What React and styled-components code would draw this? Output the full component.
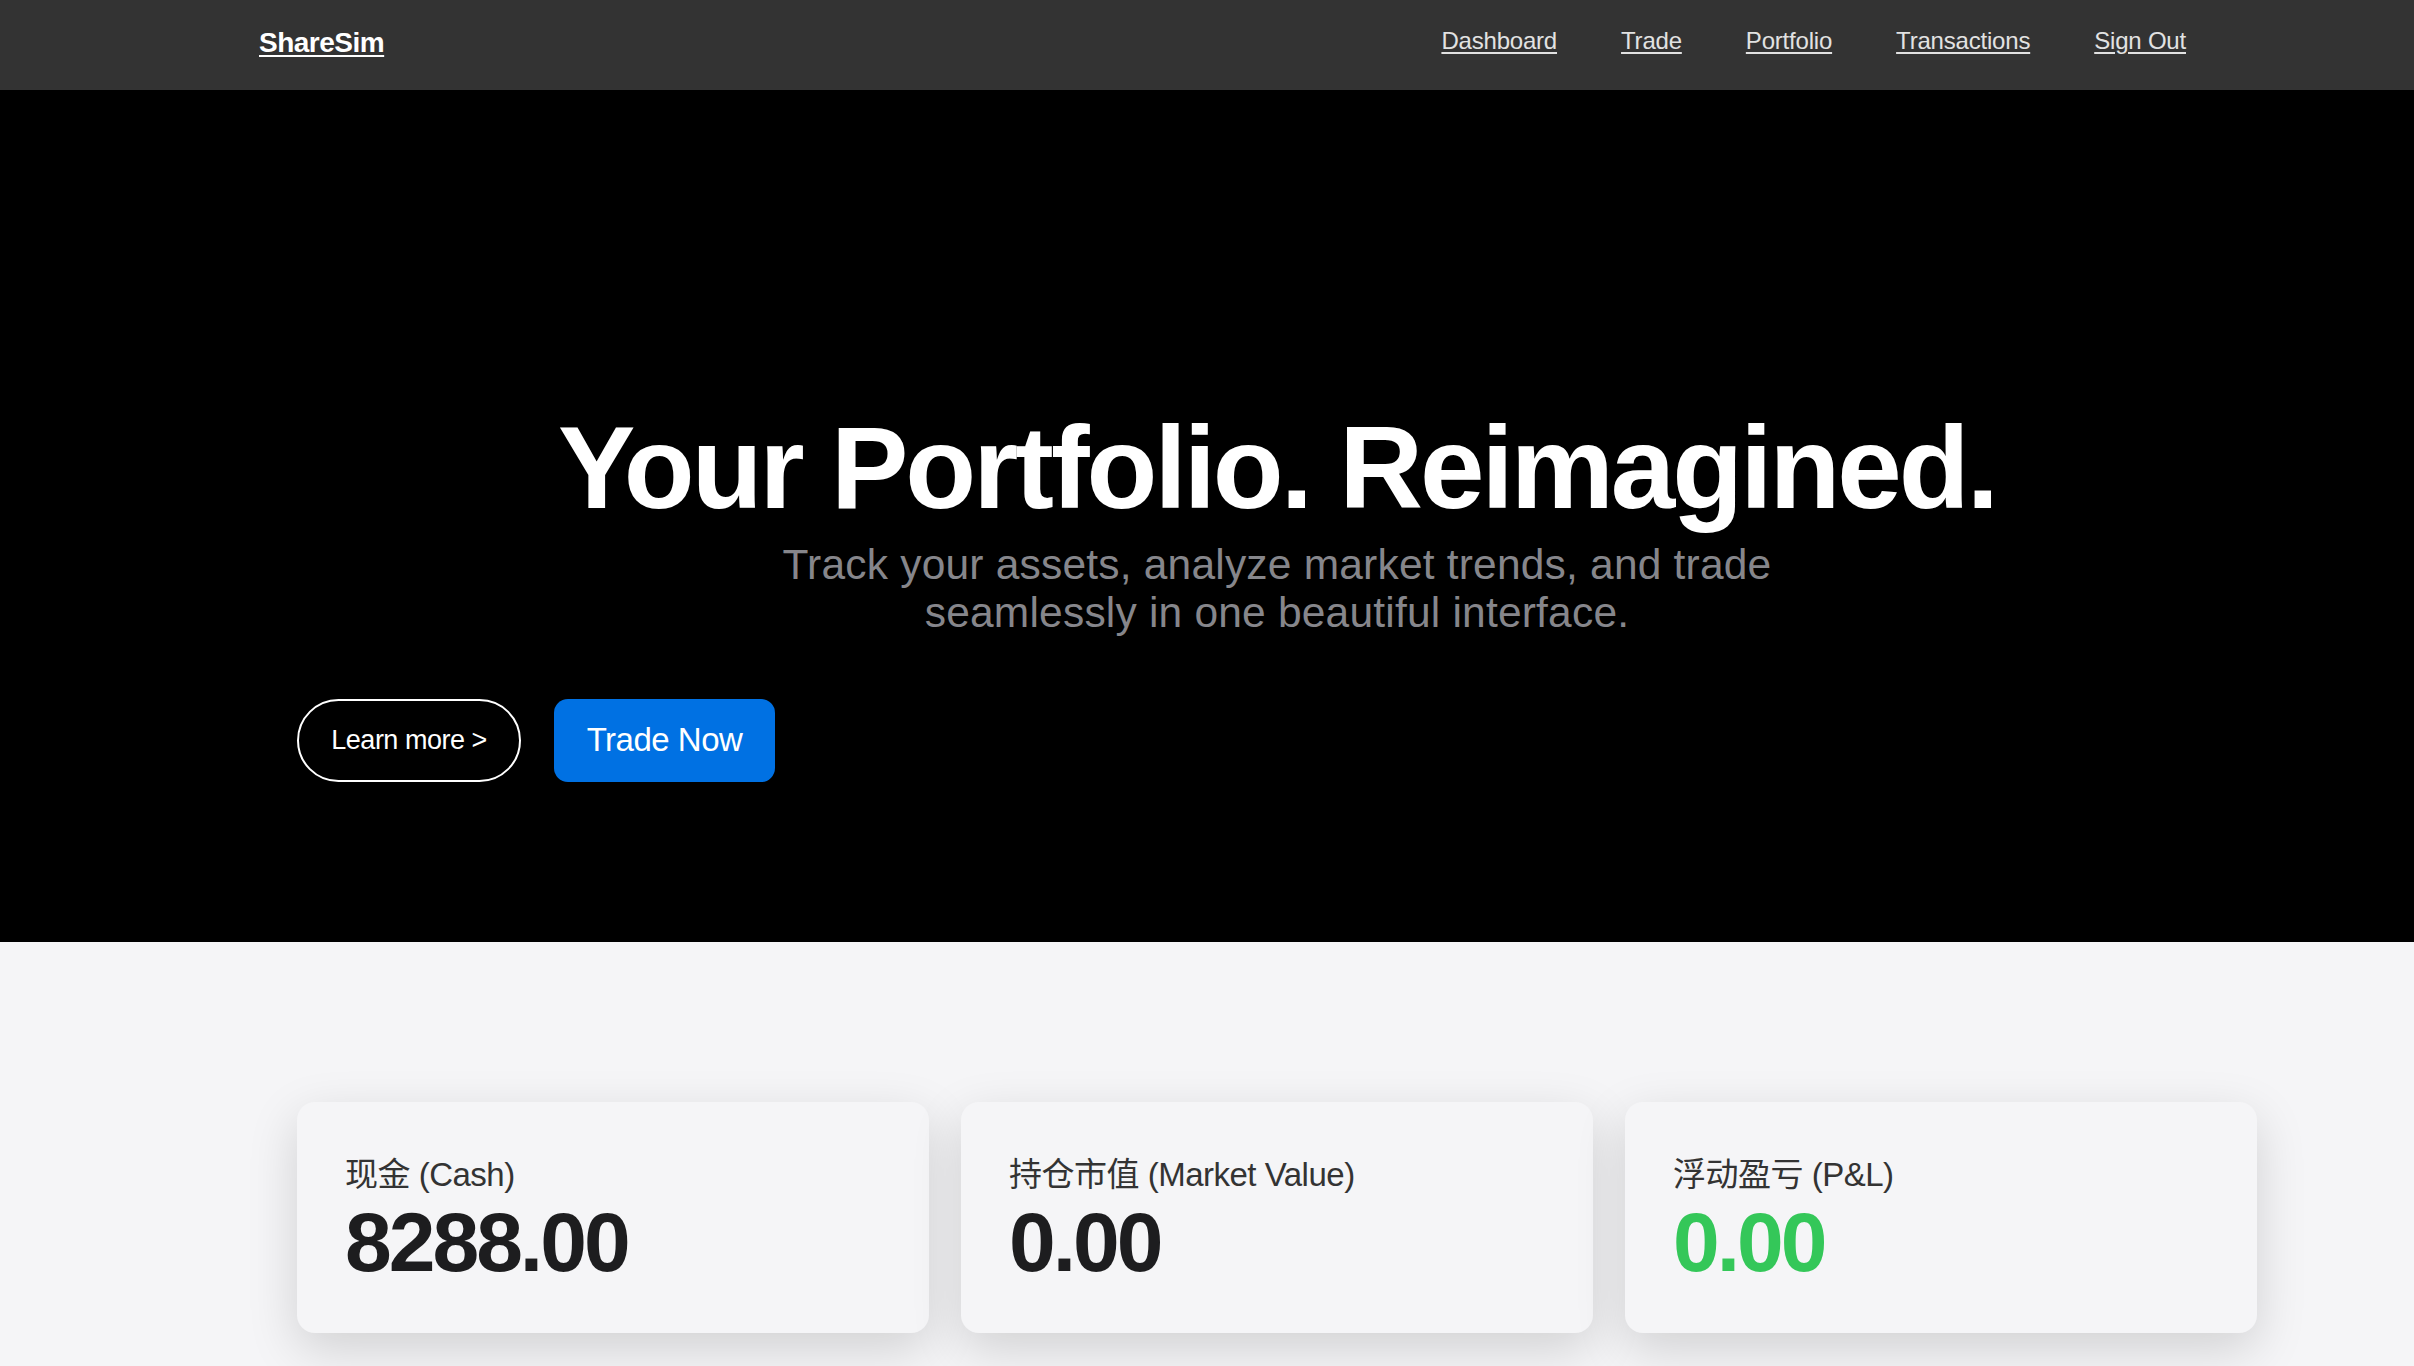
import React from 'react';
import styled, { createGlobalStyle } from 'styled-components';

const GlobalStyle = createGlobalStyle`
  html, body {
    margin: 0;
    padding: 0;
    background: #f5f5f7;
    font-family: "Liberation Sans", "Noto Sans CJK SC", Arial, sans-serif;
  }
`;

const NavBar = styled.nav`
  height: 90px;
  background: #333333;
  display: flex;
  align-items: center;
  justify-content: space-between;
  padding: 0 228px 8px 259px;
  box-sizing: border-box;
`;

const Logo = styled.a`
  color: #ffffff;
  font-size: 28px;
  font-weight: 700;
  letter-spacing: -0.5px;
  text-decoration: underline;
  text-underline-offset: 3px;
  margin-top: 4px;
`;

const NavLinks = styled.div`
  display: flex;
  gap: 64px;
`;

const NavLink = styled.a`
  color: #e2e2e2;
  font-size: 24px;
  letter-spacing: -0.2px;
  text-decoration: underline;
  text-underline-offset: 3px;
`;

const Hero = styled.section`
  background: #000000;
  padding: 315px 0 160px;
`;

const Container = styled.div`
  width: 1960px;
  margin-left: 297px;
  box-sizing: border-box;
`;

const Title = styled.h1`
  margin: 0;
  color: #ffffff;
  text-align: center;
  font-size: 116px;
  line-height: 1.1;
  font-weight: 700;
  letter-spacing: -3px;
`;

const Subtitle = styled.p`
  margin: 8px auto 0;
  max-width: 1080px;
  color: #86868b;
  text-align: center;
  font-size: 42.5px;
  line-height: 48px;
  letter-spacing: 0.2px;
`;

const Actions = styled.div`
  display: flex;
  gap: 33px;
  margin-top: 62px;
`;

const Button = styled.a`
  display: flex;
  align-items: center;
  justify-content: center;
  height: 83px;
  box-sizing: border-box;
  color: #ffffff;
  text-decoration: none;
  border-radius: ${(p) => (p.$primary ? '14px' : '42px')};
  background: ${(p) => (p.$primary ? '#0071e3' : 'transparent')};
  border: ${(p) => (p.$primary ? 'none' : '2px solid #ffffff')};
  width: ${(p) => (p.$primary ? '221px' : '224px')};
  font-size: ${(p) => (p.$primary ? '33px' : '27px')};
  letter-spacing: -0.5px;
`;

const Stats = styled.section`
  padding: 160px 0 40px;
`;

const Cards = styled.div`
  display: grid;
  grid-template-columns: repeat(3, 1fr);
  gap: 32px;
`;

const Card = styled.div`
  background: #f5f5f7;
  border-radius: 18px;
  height: 231px;
  box-sizing: border-box;
  padding: 53px 48px 0;
  box-shadow: 0 16px 50px rgba(0, 0, 0, 0.15);
`;

const Label = styled.div`
  color: #333333;
  font-size: 33px;
  line-height: 40px;
  letter-spacing: -0.5px;
`;

const Value = styled.div`
  margin-top: 2px;
  color: ${(p) => p.$color || '#1d1d1f'};
  font-size: 84px;
  line-height: 90px;
  font-weight: 700;
  letter-spacing: -3px;
`;

const links = ['Dashboard', 'Trade', 'Portfolio', 'Transactions', 'Sign Out'];

const stats = [
  { label: '现金 (Cash)', value: '8288.00' },
  { label: '持仓市值 (Market Value)', value: '0.00' },
  { label: '浮动盈亏 (P&L)', value: '0.00', color: '#34c759' },
];

export default function App() {
  return (
    <>
      <GlobalStyle />
      <NavBar>
        <Logo href="#">ShareSim</Logo>
        <NavLinks>
          {links.map((l) => (
            <NavLink key={l} href="#">
              {l}
            </NavLink>
          ))}
        </NavLinks>
      </NavBar>
      <Hero>
        <Container>
          <Title>Your Portfolio. Reimagined.</Title>
          <Subtitle>
            Track your assets, analyze market trends, and trade seamlessly in one beautiful interface.
          </Subtitle>
          <Actions>
            <Button href="#">Learn more &gt;</Button>
            <Button href="#" $primary>
              Trade Now
            </Button>
          </Actions>
        </Container>
      </Hero>
      <Stats>
        <Container>
          <Cards>
            {stats.map((s) => (
              <Card key={s.label}>
                <Label>{s.label}</Label>
                <Value $color={s.color}>{s.value}</Value>
              </Card>
            ))}
          </Cards>
        </Container>
      </Stats>
    </>
  );
}
